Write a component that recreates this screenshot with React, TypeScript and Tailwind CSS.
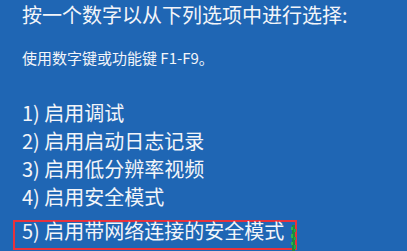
import React from "react";

const font = { fontFamily: '"Noto Sans CJK SC", "Noto Sans", sans-serif' };

export default function App() {
  const items = ["1) 启用调试", "2) 启用启动日志记录", "3) 启用低分辨率视频", "4) 启用安全模式"];
  return (
    <div className="w-[407px] h-[251px] overflow-hidden bg-[#1f66b4] text-[#f3f5f9] pl-[22px]" style={font}>
      <div className="pt-[1px] text-[20px] leading-[28px] whitespace-nowrap">按一个数字以从下列选项中进行选择:</div>
      <div className="mt-[18px] text-[15px] leading-[21px] whitespace-nowrap">使用数字键或功能键 F1-F9。</div>
      <div className="mt-[31px] flex flex-col">
        {items.map((t) => (
          <div key={t} className="text-[20px] leading-[28px] whitespace-nowrap">
            {t}
          </div>
        ))}
        <div className="relative mt-[9px] -ml-[9px] w-[284px] h-[30px] border-2 border-[#e8323c] pl-[7px] box-border">
          <div className="text-[20px] leading-[17px] whitespace-nowrap">5) 启用带网络连接的安全模式</div>
          <svg className="absolute right-[-2px] top-[3px]" width="6" height="26" viewBox="0 0 6 26">
            <rect x="1" y="0" width="3" height="26" fill="#1d8a3e" />
            <rect x="0" y="2" width="2" height="3" fill="#2fb34f" />
            <rect x="3" y="4" width="2" height="3" fill="#27a347" />
            <rect x="0" y="9" width="2" height="4" fill="#2fb34f" />
            <rect x="3" y="12" width="2" height="3" fill="#27a347" />
            <rect x="0" y="17" width="2" height="3" fill="#2fb34f" />
            <rect x="3" y="20" width="2" height="4" fill="#27a347" />
          </svg>
        </div>
      </div>
    </div>
  );
}
